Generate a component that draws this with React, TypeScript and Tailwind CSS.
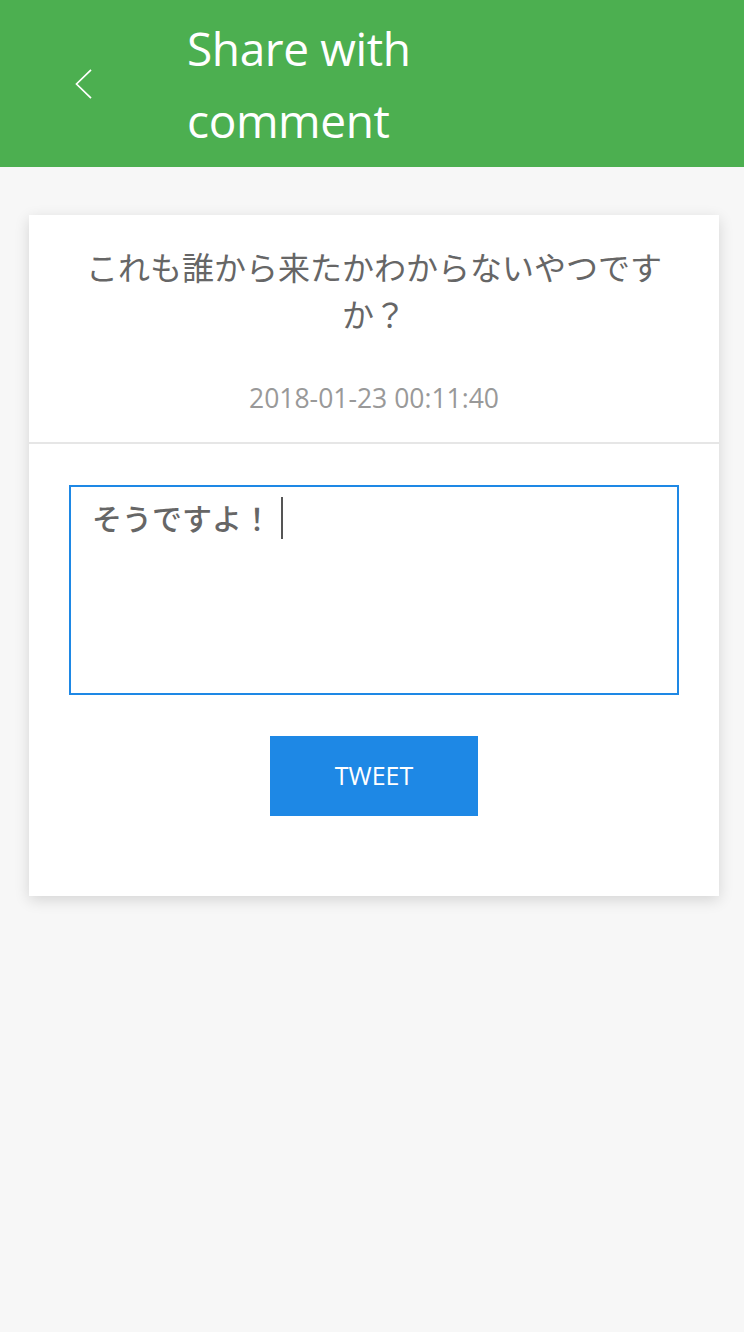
import React from "react";

export default function App() {
  const font = { fontFamily: '"Open Sans", "Noto Sans CJK JP", sans-serif' };
  return (
    <div className="min-h-[1332px] w-full bg-[#f7f7f7]" style={font}>
      <header className="flex h-[167px] items-center bg-[#4caf50] text-white">
        <div className="flex w-[187px] items-center pl-[75px]">
          <svg width="17" height="30" viewBox="0 0 17 30" fill="none">
            <polyline points="16,0.8 1.5,15 16,29.2" stroke="white" strokeWidth="1.7" fill="none" />
          </svg>
        </div>
        <h1 className="w-[370px] text-[46px] leading-[72px] font-normal tracking-[-0.4px]">
          Share with comment
        </h1>
      </header>

      <main className="pl-[29px] pr-[25px] pt-[48px]">
        <div className="bg-white shadow-[0_4px_14px_rgba(0,0,0,0.14)]">
          <div className="px-[44px] pt-[28px] pb-[24px] text-center">
            <p
              className="text-[32px] leading-[47px] text-[#666666]"
              style={{ fontFamily: '"Noto Sans CJK JP", "Open Sans", sans-serif' }}
            >
              これも誰から来たかわからないやつですか？
            </p>
            <p className="mt-[42px] text-[26.5px] leading-[39px] text-[#999999]">
              2018-01-23 00:11:40
            </p>
          </div>
          <div className="h-[2px] bg-[#e6e6e6]" />
          <div className="flex flex-col items-center px-[40px] pt-[41px] pb-[80px]">
            <div className="h-[210px] w-full border-2 border-[#1e88e5] bg-white pl-[21px] pt-[8px]">
              <div
                className="flex items-center text-[30px] leading-[45px] font-medium text-[#666666]"
                style={{ fontFamily: '"Noto Sans CJK JP", "Open Sans", sans-serif' }}
              >
                <span>そうですよ！</span>
                <span className="ml-[9px] inline-block h-[42px] w-[2px] bg-[#555555]" />
              </div>
            </div>
            <button className="mt-[41px] flex h-[80px] w-[208px] items-center justify-center bg-[#1e88e5] text-[25px] text-white">
              TWEET
            </button>
          </div>
        </div>
      </main>
    </div>
  );
}
